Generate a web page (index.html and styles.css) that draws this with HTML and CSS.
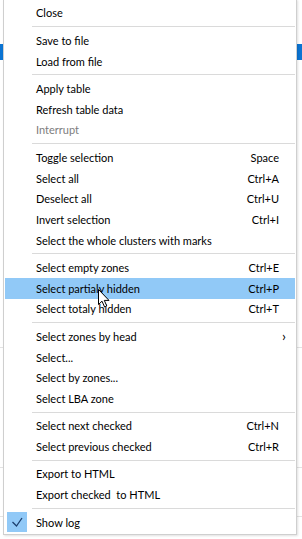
FILE: index.html
```html
<!DOCTYPE html>
<html lang="en">

<head>
    <meta charset="UTF-8">
    <meta name="viewport" content="width=device-width, initial-scale=1.0">
    <title>Zone list menu</title>
    <link rel="stylesheet" href="styles.css">
</head>

<body>
    <!-- table that lies under the popup menu -->
    <div class="table">
        <div class="band b1"></div>
        <div class="row-selected"></div>
        <div class="band b2"></div>
        <div class="band b3"></div>
        <div class="band b4"></div>
    </div>

    <div class="menu">
        <div class="item"><span>Close</span></div>
        <div class="sep"></div>
        <div class="item"><span>Save to file</span></div>
        <div class="item"><span>Load from file</span></div>
        <div class="sep"></div>
        <div class="item"><span>Apply table</span></div>
        <div class="item"><span>Refresh table data</span></div>
        <div class="item disabled"><span>Interrupt</span></div>
        <div class="sep"></div>
        <div class="item"><span>Toggle selection</span><span class="key">Space</span></div>
        <div class="item"><span>Select all</span><span class="key">Ctrl+A</span></div>
        <div class="item"><span>Deselect all</span><span class="key">Ctrl+U</span></div>
        <div class="item"><span>Invert selection</span><span class="key">Ctrl+I</span></div>
        <div class="item"><span>Select the whole clusters with marks</span></div>
        <div class="sep"></div>
        <div class="item"><span>Select empty zones</span><span class="key">Ctrl+E</span></div>
        <div class="item hover"><span>Select partialy hidden</span><span class="key">Ctrl+P</span></div>
        <div class="item"><span>Select totaly hidden</span><span class="key">Ctrl+T</span></div>
        <div class="sep"></div>
        <div class="item"><span>Select zones by head</span><span class="arrow">&#x203A;</span></div>
        <div class="item"><span>Select...</span></div>
        <div class="item"><span>Select by zones...</span></div>
        <div class="item"><span>Select LBA zone</span></div>
        <div class="sep"></div>
        <div class="item"><span>Select next checked</span><span class="key">Ctrl+N</span></div>
        <div class="item"><span>Select previous checked</span><span class="key">Ctrl+R</span></div>
        <div class="sep"></div>
        <div class="item"><span>Export to HTML</span></div>
        <div class="item"><span>Export checked&nbsp; to HTML</span></div>
        <div class="sep"></div>
        <div class="item checked">
            <span class="check">
                <svg width="20" height="20" viewBox="0 0 20 20">
                    <path d="M5.5 10 L9.5 14 L15 6" fill="none" stroke="#1c3f6e" stroke-width="1.3" />
                </svg>
            </span>
            <span>Show log</span>
        </div>
    </div>

    <svg class="cursor" width="13" height="20" viewBox="0 0 13 20">
        <path d="M0.5 0.5 L0.5 15.5 L4 12.2 L6.6 18 L8.8 17 L6.3 11.4 L11 11.4 Z" fill="#fff" stroke="#000" stroke-width="1" stroke-linejoin="round" />
    </svg>
</body>

</html>
```

FILE: styles.css
```css
body {
    margin: 0;
    width: 302px;
    height: 539px;
    overflow: hidden;
    background-color: #fff;
    font-family: Lato, "Noto Sans", sans-serif;
    font-size: 11px;
    color: #000;
    position: relative;
}

.table {
    display: flex;
    flex-direction: column;
}

.band {
    border-bottom: 1px solid #e3e3e3;
}

.b1 {
    height: 44px;
    border-bottom: none;
}

.row-selected {
    height: 16px;
    background-color: #0b74d3;
}

.b2 {
    height: 287px;
}

.b3 {
    height: 119px;
}

.b4 {
    height: 48px;
}

.menu {
    position: absolute;
    left: 3px;
    top: -1px;
    width: 292px;
    padding: 2.65px 0 1.3px;
    background-color: #fff;
    border: 1px solid #cfcfcf;
    box-shadow: 1px 1px 2px rgba(0, 0, 0, 0.12);
}

.item {
    display: flex;
    align-items: center;
    justify-content: space-between;
    height: 20.7px;
    margin: 0 1px;
    padding: 0 16px 0 31px;
    white-space: nowrap;
}

.item.hover {
    background-color: #91c9f7;
}

.item.disabled {
    color: #7d7d7d;
}

.arrow {
    font-size: 14px;
    margin-right: -7px;
    line-height: 1;
}

.item.checked {
    justify-content: flex-start;
    padding-left: 2px;
}

.check {
    display: flex;
    width: 20px;
    height: 20px;
    margin-right: 9px;
    background-color: #91c9f7;
}

.sep {
    height: 1px;
    margin: 3px 1px 2.75px 28px;
    background-color: #dadada;
}

.cursor {
    position: absolute;
    left: 98px;
    top: 289px;
}
```
